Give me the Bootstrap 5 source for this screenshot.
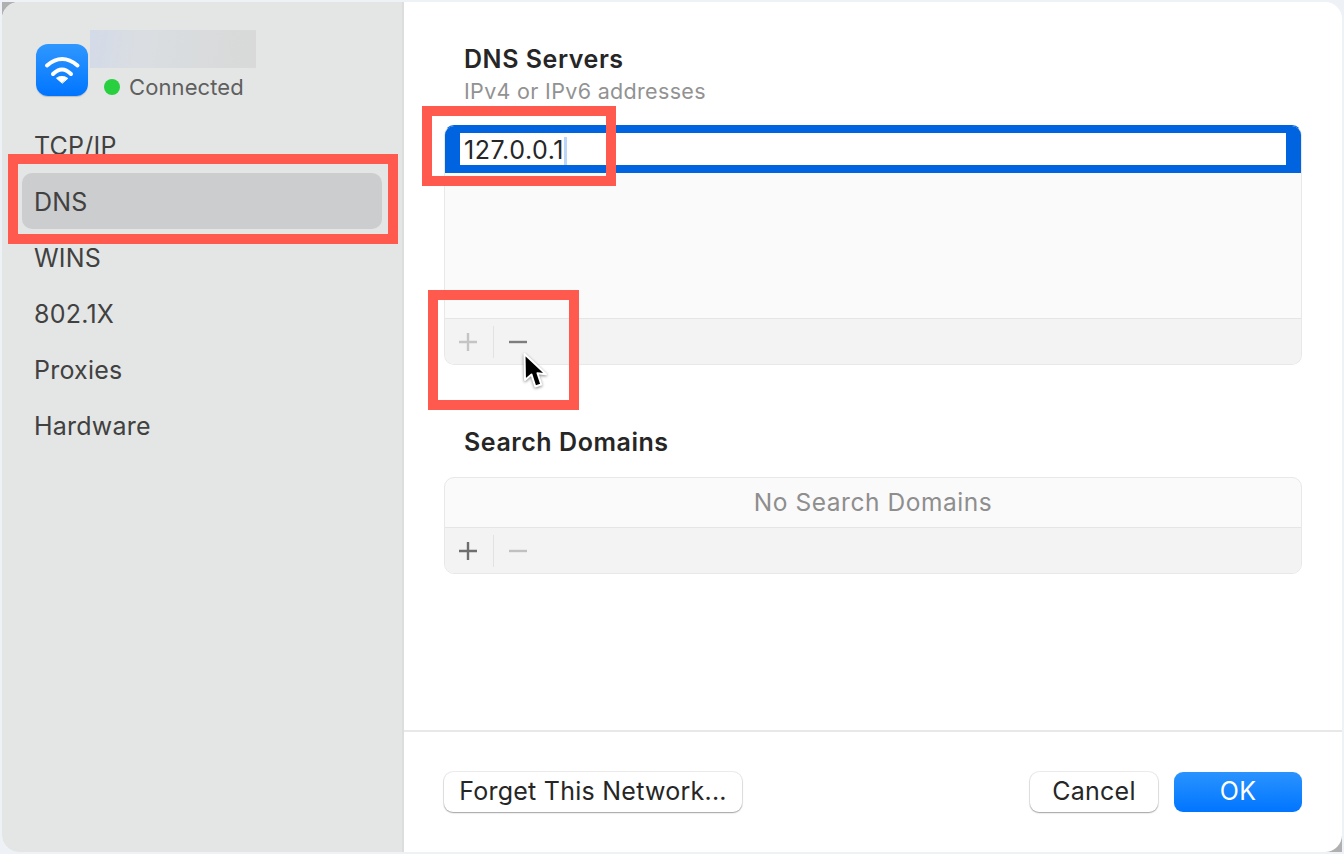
<!DOCTYPE html>
<html lang="en">
<head>
<meta charset="utf-8">
<title>DNS</title>
<link href="https://cdn.jsdelivr.net/npm/bootstrap@5.3.0/dist/css/bootstrap.min.css" rel="stylesheet">
<style>
html,body{height:100%;margin:0}
body{background:#eef2f6;font-family:Inter,"Liberation Sans",sans-serif;color:#262626;overflow:hidden}
.stage{position:relative;width:1344px;height:854px;padding:2px}
.win{height:850px;border-radius:17px;overflow:hidden;background:#fff}
.side{width:402px;background:#e4e6e5;border-right:2px solid #dcdddc;flex:none}
.head{height:115px;padding:28px 0 0 34px;position:relative}
.wifi{width:52px;height:52px;margin-top:14px;border-radius:12px;background:linear-gradient(#2f97ff,#0075ff);box-shadow:0 1px 1px rgba(0,0,0,.18);flex:none}
.blurb{position:absolute;left:88px;top:28px;width:166px;height:38px;background:linear-gradient(100deg,#d3dae8 0,#dadee2 30%,#d8d9d8 100%)}
.conn{position:absolute;left:102px;top:72px;font-size:22px;letter-spacing:.1px;color:#5f5f5f;line-height:26px}
.dot{width:16px;height:16px;background:#28d040;border-radius:50%;margin-right:1px}
.side-item{height:56px;margin:0 20px;padding-left:12px;font-size:25px;letter-spacing:.22px;line-height:58px;color:#414141;border-radius:10px}
.side-item.on{background:#cccdce}
.main{min-width:0}
.pane{padding:41px 40px 0 40px}
.h-title{font-size:25px;font-weight:600;line-height:32px;margin:0 0 0 20px;color:#262626;letter-spacing:.55px}
.h-sub{font-size:21.500px;letter-spacing:.32px;line-height:32px;color:#929292;margin:0 0 0 20px;height:50px}
.boxed{border:1px solid #e8e8e8;border-radius:10px;overflow:hidden;background:#fafafa}
.boxed-active{border-top-color:#0064e1}
.sel-row{height:48px;margin:-1px -1px 0;padding:8px 16px;background:#0064e1}
.sel-input{height:32px;background:#fff;font-size:25px;letter-spacing:.55px;line-height:34px;color:#262626;padding-left:4px}
.caret{display:inline-block;width:3px;height:28px;background:#bcd6f7;vertical-align:-6px;margin-left:0}
.blank{height:145px}
.tools{height:46px;background:#f3f3f3;border-top:1px solid #e5e5e5;padding-left:13px}
.tool{width:20px;height:20px;flex:none;display:block}
.vsep{width:1px;height:32px;background:#e2e2e2;margin:0 14px 0 15px}
.empty-row{height:49px;text-align:center;font-size:24.500px;letter-spacing:.55px;line-height:48px;color:#8e8e8e}
.gap-title{margin-top:61px;margin-bottom:19px}
.foot{border-top:2px solid #e8e8e8;height:122px;padding:40px 40px 0 40px}
.mac-btn{height:40px;border-radius:9px;font-size:25px;letter-spacing:.25px;line-height:36px;padding:0 0 2px;background:#fff;color:#262626;border:0;box-shadow:0 0 0 1px rgba(0,0,0,.07),0 1px 1.500px rgba(0,0,0,.32);text-align:center}
.mac-forget{width:298px}
.mac-cancel{width:128px}
.mac-ok{width:128px;background:linear-gradient(#2a93ff,#0075ff);color:#fff;box-shadow:0 0 1px rgba(0,0,0,.1)}
.hl{position:absolute;border:10px solid #ff5a4d;pointer-events:none}
.hl-a{left:8px;top:154px;width:390px;height:90px}
.hl-b{left:422px;top:106px;width:194px;height:80px}
.hl-c{left:428px;top:290px;width:151px;height:120px}
.pointer{position:absolute;left:520px;top:349px;width:30px;height:42px}
.pointer path{filter:drop-shadow(0 1px 1.500px rgba(0,0,0,.45))}
.nook{position:absolute;width:16px;height:16px;background:#b0b0b0;z-index:-1}
.nook-tl{left:2px;top:2px}
.nook-br{right:2px;bottom:2px}
</style>
</head>
<body>
<div class="stage">
  <div class="nook nook-tl"></div>
  <div class="nook nook-br"></div>
  <div class="win d-flex">
    <aside class="side d-flex flex-column">
      <div class="head">
        <div class="wifi">
          <svg class="d-block" width="52" height="52" viewBox="0 0 52 52" fill="none" stroke="#fff" stroke-linecap="round">
            <path d="M11 21.500Q26 8.500 41.500 21.500" stroke-width="4"/>
            <path d="M17 30Q26 21 35 30" stroke-width="4"/>
            <path d="M26 39l-5.500-4.800c3-2.400 8-2.400 11 0z" fill="#fff" stroke="#fff" stroke-width="1" stroke-linejoin="round"/>
          </svg>
        </div>
        <div class="blurb"></div>
        <div class="conn d-flex align-items-center gap-2"><span class="dot"></span><span>Connected</span></div>
      </div>
      <div class="side-item">TCP/IP</div>
      <div class="side-item on">DNS</div>
      <div class="side-item">WINS</div>
      <div class="side-item">802.1X</div>
      <div class="side-item">Proxies</div>
      <div class="side-item">Hardware</div>
    </aside>
    <main class="main flex-grow-1 d-flex flex-column">
      <div class="pane flex-grow-1">
        <h2 class="h-title">DNS Servers</h2>
        <p class="h-sub">IPv4 or IPv6 addresses</p>
        <div class="boxed boxed-active">
          <div class="sel-row"><div class="sel-input">127.0.0.1<span class="caret"></span></div></div>
          <div class="blank"></div>
          <div class="tools d-flex align-items-center">
            <svg class="tool" viewBox="0 0 20 20" stroke="#c4c4c4" stroke-width="2.400"><path d="M1 10h18M10 1v18"/></svg>
            <span class="vsep"></span>
            <svg class="tool" viewBox="0 0 20 20" stroke="#7d7d7d" stroke-width="2.400"><path d="M1 10h18"/></svg>
          </div>
        </div>
        <h2 class="h-title gap-title">Search Domains</h2>
        <div class="boxed">
          <div class="empty-row">No Search Domains</div>
          <div class="tools d-flex align-items-center">
            <svg class="tool" viewBox="0 0 20 20" stroke="#6e6e6e" stroke-width="2.400"><path d="M1 10h18M10 1v18"/></svg>
            <span class="vsep"></span>
            <svg class="tool" viewBox="0 0 20 20" stroke="#c0c0c0" stroke-width="2.400"><path d="M1 10h18"/></svg>
          </div>
        </div>
      </div>
      <div class="foot d-flex">
        <button type="button" class="btn mac-btn mac-forget">Forget This Network...</button>
        <div class="ms-auto d-flex gap-3">
          <button type="button" class="btn mac-btn mac-cancel">Cancel</button>
          <button type="button" class="btn mac-btn mac-ok">OK</button>
        </div>
      </div>
    </main>
  </div>
  <div class="hl hl-a"></div>
  <div class="hl hl-b"></div>
  <div class="hl hl-c"></div>
  <svg class="pointer" viewBox="0 0 30 42">
    <path d="M4.500 5L5 31l6.500-5.500L15.300 37.500l6-2-3.800-11.300 8.500 1z" fill="#000" stroke="#fff" stroke-width="2" stroke-linejoin="round"/>
  </svg>
</div>
</body>
</html>
